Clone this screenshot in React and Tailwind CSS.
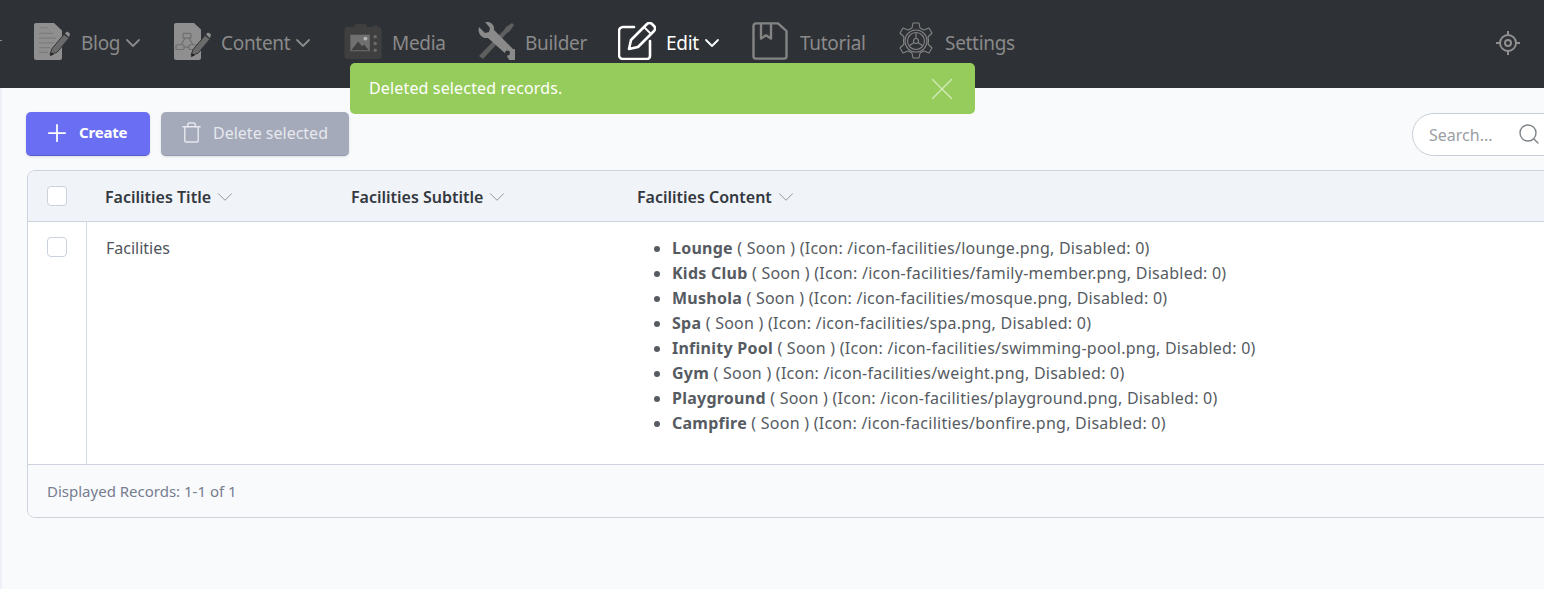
import React from 'react';
import { ChevronDown, Plus, Trash, Search, X } from 'lucide-react';

const BlogIcon = () => (
  <svg width="38" height="38" viewBox="0 0 38 40" preserveAspectRatio="none">
    <path d="M1 3a2 2 0 0 1 2-2h18l8 8v29a2 2 0 0 1-2 2H3a2 2 0 0 1-2-2z" fill="#8f8f8f" />
    <path d="M7 6h8M6 12h14M6 17h17M6 22h15M6 27h11M6 32h9" stroke="#7c7c7c" strokeWidth="1.2" />
    <path d="M17 34l2-6 12-15 5 4-12 15z" fill="#6a6a6a" stroke="#2e3135" strokeWidth="1" />
    <path d="M32 12l2-2 3 2-1 4z" fill="#8f8f8f" />
    <path d="M17 36l1-4 3 2z" fill="#222" />
  </svg>
);

const ContentIcon = () => (
  <svg width="38" height="38" viewBox="0 0 38 40" preserveAspectRatio="none">
    <path d="M1 3a2 2 0 0 1 2-2h18l7 7v30a2 2 0 0 1-2 2H3a2 2 0 0 1-2-2z" fill="#8f8f8f" />
    <g fill="none" stroke="#6f6f6f" strokeWidth="1.2">
      <rect x="10" y="12" width="8" height="5" rx="1" />
      <rect x="3" y="24" width="8" height="5" rx="1" />
      <rect x="16" y="24" width="8" height="5" rx="1" />
      <path d="M12 17l-4 7M16 17l4 7M11 26.500h5" />
    </g>
    <path d="M18 35l2-6 12-15 5 4-12 15z" fill="#6a6a6a" stroke="#2e3135" strokeWidth="1" />
    <path d="M33 13l2-2 3 2-1 4z" fill="#8f8f8f" />
    <path d="M18 37l1-4 3 2z" fill="#222" />
  </svg>
);

const MediaIcon = () => (
  <svg width="38" height="35" viewBox="0 0 38 36">
    <path d="M10 3V2a2 2 0 0 1 2-2h9a2 2 0 0 1 2 2v1h6V1.500h5V3a3 3 0 0 1 4 3v27a3 3 0 0 1-3 3H3a3 3 0 0 1-3-3V6a3 3 0 0 1 3-3z" fill="#3f3f3f" />
    <rect x="6" y="11" width="20" height="17" fill="#707070" />
    <path d="M7 27l7-9 4 5 2-2 5 6z" fill="#3f3f3f" />
    <circle cx="21.500" cy="15" r="2" fill="#b5b5b5" />
    <circle cx="31.500" cy="13" r="1.800" fill="#6b6b6b" />
    <circle cx="31.500" cy="20" r="1.800" fill="#6b6b6b" />
    <circle cx="31.500" cy="27" r="1.800" fill="#6b6b6b" />
  </svg>
);

const BuilderIcon = () => (
  <svg width="38" height="38" viewBox="0 0 38 38">
    <path d="M2 34L27 8l2-3 6-4 2 2-4 6-3 2L6 37z" fill="#5f5f5f" />
    <path d="M2 5l6 6 4-1 1-4-5-6c5-1 10 3 9 8l19 19a6 6 0 1 1-6 6L11 16C5 17 0 11 2 5z" fill="#8a8a8a" />
    <circle cx="30.500" cy="31" r="2.500" fill="#2e3135" />
  </svg>
);

const EditIcon = () => (
  <svg width="38" height="38" viewBox="0 0 38 38" fill="none" stroke="#fff" strokeWidth="2.600" strokeLinecap="round" strokeLinejoin="round">
    <path d="M16 5H5a4 4 0 0 0-4 4v24a4 4 0 0 0 4 4h24a3 3 0 0 0 3-3V19" />
    <path d="M11 27l2-9L29 2a3.500 3.500 0 0 1 5 0l2 2a3.500 3.500 0 0 1 0 5L20 25z" />
    <path d="M26 5l7 7" strokeWidth="1.800" />
  </svg>
);

const TutorialIcon = () => (
  <svg width="36" height="38" viewBox="0 0 36 40" preserveAspectRatio="none" fill="none" stroke="#848484" strokeWidth="2.400" strokeLinejoin="round">
    <path d="M4 1.500h22l8.500 8V36a2.500 2.500 0 0 1-2.500 2.500H4A2.500 2.500 0 0 1 1.500 36V4A2.500 2.500 0 0 1 4 1.500z" />
    <path d="M9 1.500v16l5-3.500 5 3.500v-16" />
  </svg>
);

const SettingsIcon = () => (
  <svg width="38" height="38" viewBox="0 0 38 38" fill="none" stroke="#848484" strokeWidth="1.100" strokeLinejoin="round">
    <path d="M16 1h6l1 5 4 2 5-2 3 5-4 4 .6 4-.6 3 4 4-3 5-5-2-4 2-1 5h-6l-1-5-4-2-5 2-3-5 4-4-.6-3 .6-4-4-4 3-5 5 2 4-2z" />
    <circle cx="19" cy="19" r="11" />
    <circle cx="19" cy="19" r="8.500" />
    <circle cx="19" cy="19" r="2.500" />
    <path d="M19 16.500V11M17 20.500l-5 3.500M21 20.500l5 3.500" />
  </svg>
);

const TargetIcon = () => (
  <svg width="26" height="26" viewBox="0 0 26 26" fill="none" stroke="#8f8f8f" strokeWidth="2">
    <circle cx="13" cy="13" r="8" />
    <circle cx="13" cy="13" r="3" />
    <path d="M13 1v4M13 21v4M1 13h4M21 13h4" />
  </svg>
);

const navItems = [
  { label: 'Blog', icon: <BlogIcon />, chevron: true, width: 'w-[140px]' },
  { label: 'Content', icon: <ContentIcon />, chevron: true, width: 'w-[171px]' },
  { label: 'Media', icon: <MediaIcon />, width: 'w-[133px]' },
  { label: 'Builder', icon: <BuilderIcon />, width: 'w-[141px]' },
  { label: 'Edit', icon: <EditIcon />, chevron: true, active: true, width: 'w-[134px]' },
  { label: 'Tutorial', icon: <TutorialIcon />, width: 'w-[145px]' },
  { label: 'Settings', icon: <SettingsIcon />, width: 'w-[130px]' },
];

const facilities = [
  ['Lounge', 'lounge'],
  ['Kids Club', 'family-member'],
  ['Mushola', 'mosque'],
  ['Spa', 'spa'],
  ['Infinity Pool', 'swimming-pool'],
  ['Gym', 'weight'],
  ['Playground', 'playground'],
  ['Campfire', 'bonfire'],
];

const Checkbox = () => (
  <div className="h-5 w-5 rounded-[4px] border border-[#cbd2dc] bg-white" />
);

const SortHead = ({ label, width }) => (
  <div className={`flex items-center gap-[1px] ${width}`}>
    <span className="text-[16px] font-semibold text-[#33383f]">{label}</span>
    <ChevronDown size={26} strokeWidth={0.9} className="text-[#8f959f]" />
  </div>
);

export default function App() {
  return (
    <div className="relative h-[589px] w-[1544px] overflow-hidden bg-[#f9fafc] font-['Noto_Sans',sans-serif]">
      <nav className="relative flex h-[88px] items-center bg-[#2e3135] pb-[2px] pl-[33px]">
        <span className="absolute left-0 top-[40px] h-[1px] w-[2px] bg-[#8a8a8a]" />
        {navItems.map((item) => (
          <div key={item.label} className={`flex items-center ${item.width}`}>
            <span className="mb-[4px] flex w-[48px] shrink-0 items-center">{item.icon}</span>
            <span className={`text-[19px] tracking-[-0.3px] ${item.active ? 'text-white' : 'text-[#8a8a8a]'}`}>{item.label}</span>
            {item.chevron && (
              <ChevronDown size={24} strokeWidth={1.8} className={`ml-[1px] ${item.active ? 'text-white' : 'text-[#8a8a8a]'}`} />
            )}
          </div>
        ))}
        <span className="ml-auto mr-[23px] flex"><TargetIcon /></span>
      </nav>

      {/* toast sits over the nav */}
      <div className="absolute left-[350px] top-[63px] flex h-[51px] w-[625px] items-center justify-between rounded-[5px] bg-[#96cc5b] pl-[19px] pr-[14px]">
        <span className="pb-[2px] text-[16px] tracking-[0.15px] text-white">Deleted selected records.</span>
        <X size={38} strokeWidth={0.8} className="text-[#d5eabc]" />
      </div>

      <div className="h-[501px] border-l-2 border-[#eef0f7]">
        <div className="flex items-center pl-[24px] pt-[24px]">
          <button className="flex h-[44px] w-[124px] shrink-0 items-center rounded-[5px] border-b border-[#5a5dd8] bg-[#6a6ef2] pb-[2px] pl-[17px] text-[15px] font-bold tracking-[-0.2px] text-white shadow-sm">
            <Plus size={28} strokeWidth={1.5} className="mr-[8px]" />
            Create
          </button>
          <button className="ml-[11px] flex h-[44px] w-[188px] shrink-0 items-center rounded-[5px] border-b border-[#9499b2] bg-[#a5aaba] pb-[2px] pl-[19px] text-[16px] text-[#e6e8ee] shadow-sm">
            <Trash size={23} strokeWidth={1.5} className="mr-[10px] text-[#e6e8ee]" />
            Delete selected
          </button>
          <div className="ml-[1063px] flex h-[43px] w-[170px] shrink-0 items-center rounded-full border border-[#c8ced8] bg-white pl-[16px]">
            <span className="pt-[2px] text-[16px] text-[#9b9ea3]">Search...</span>
            <Search size={24} strokeWidth={1.4} className="ml-[24px] text-[#7f8589]" />
          </div>
        </div>

        <div className="ml-[25px] mt-[14px] w-[1600px] overflow-hidden rounded-[8px] border border-[#cdd4de] bg-white">
          <div className="flex h-[51px] items-center border-b border-[#cdd4de] bg-[#f0f3f8] pl-[19px]">
            <Checkbox />
            <div className="ml-[38px] flex pt-[2px]">
              <SortHead label="Facilities Title" width="w-[246px]" />
              <SortHead label="Facilities Subtitle" width="w-[286px]" />
              <SortHead label="Facilities Content" width="w-[300px]" />
            </div>
          </div>
          <div className="flex h-[242px]">
            <div className="w-[59px] border-r border-[#d6dce5] pl-[19px] pt-[15px]">
              <Checkbox />
            </div>
            <div className="w-[550px] pl-[19px] pt-[14px] text-[16px] text-[#50555c]">Facilities</div>
            <ul className="list-disc pl-[35px] pt-[14px] text-[16px] leading-[25px] tracking-[0.25px] text-[#565b62] marker:text-[#565b62]">
              {facilities.map(([name, file]) => (
                <li key={name}>
                  <strong className="font-bold">{name}</strong> ( Soon ) (Icon: /icon-facilities/{file}.png, Disabled: 0)
                </li>
              ))}
            </ul>
          </div>
          <div className="flex h-[53px] items-center border-t border-[#cdd4de] bg-[#f9fafc] pl-[19px] text-[15px] text-[#767d8f]">
            Displayed Records: 1-1 of 1
          </div>
        </div>
      </div>
    </div>
  );
}
